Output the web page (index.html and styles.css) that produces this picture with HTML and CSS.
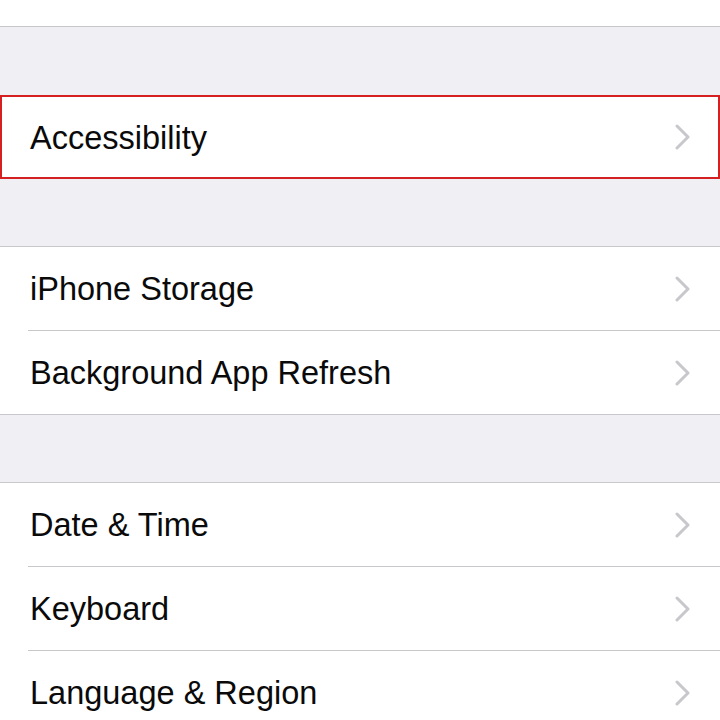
FILE: index.html
```html
<!DOCTYPE html>
<html>
<head>
<meta charset="utf-8">
<link rel="stylesheet" href="styles.css">
</head>
<body>
<div class="screen">
  <div class="group group-top">
    <div class="row"><span class="label">Home Button</span><svg class="chev" viewBox="0 0 16 26"><polyline points="2,2 13,13 2,24"/></svg></div>
  </div>
  <div class="gap"></div>
  <div class="group group-hl">
    <div class="row"><span class="label">Accessibility</span><svg class="chev" viewBox="0 0 16 26"><polyline points="2,2 13,13 2,24"/></svg></div>
  </div>
  <div class="gap"></div>
  <div class="group">
    <div class="row"><span class="label">iPhone Storage</span><svg class="chev" viewBox="0 0 16 26"><polyline points="2,2 13,13 2,24"/></svg></div>
    <div class="row"><span class="label">Background App Refresh</span><svg class="chev" viewBox="0 0 16 26"><polyline points="2,2 13,13 2,24"/></svg></div>
  </div>
  <div class="gap"></div>
  <div class="group">
    <div class="row"><span class="label">Date &amp; Time</span><svg class="chev" viewBox="0 0 16 26"><polyline points="2,2 13,13 2,24"/></svg></div>
    <div class="row"><span class="label">Keyboard</span><svg class="chev" viewBox="0 0 16 26"><polyline points="2,2 13,13 2,24"/></svg></div>
    <div class="row"><span class="label">Language &amp; Region</span><svg class="chev" viewBox="0 0 16 26"><polyline points="2,2 13,13 2,24"/></svg></div>
  </div>
</div>
</body>
</html>
```
FILE: styles.css
```css
html, body {
  margin: 0;
  padding: 0;
  background: #efeff4;
  overflow: hidden;
}
.screen {
  width: 720px;
  height: 720px;
  overflow: hidden;
  font-family: "Liberation Sans", Arial, sans-serif;
  color: #000;
}
.group {
  background: #fff;
  border-top: 1px solid #c8c7cc;
  border-bottom: 1px solid #c8c7cc;
}
.group-top {
  margin-top: -57px;
  border-top: none;
}
.group-hl {
  border: 2px solid #d42020;
}
.group-hl .row {
  height: 80px;
  padding-left: 28px;
  padding-right: 27px;
}
.gap {
  height: 67px;
}
.group-top + .gap {
  height: 68px;
}
.row {
  height: 83px;
  display: flex;
  align-items: center;
  justify-content: space-between;
  padding: 0 29px 0 30px;
  position: relative;
}
.row + .row {
  border-top: 1px solid #c8c7cc;
  margin-left: 28px;
  padding-left: 2px;
}
.label {
  font-size: 32.5px;
  padding-top: 2px;
  color: #0a0a0a;
}
.chev {
  width: 16px;
  height: 26px;
  fill: none;
  stroke: #c7c7cc;
  stroke-width: 3;
  stroke-linecap: round;
  stroke-linejoin: round;
}
```
